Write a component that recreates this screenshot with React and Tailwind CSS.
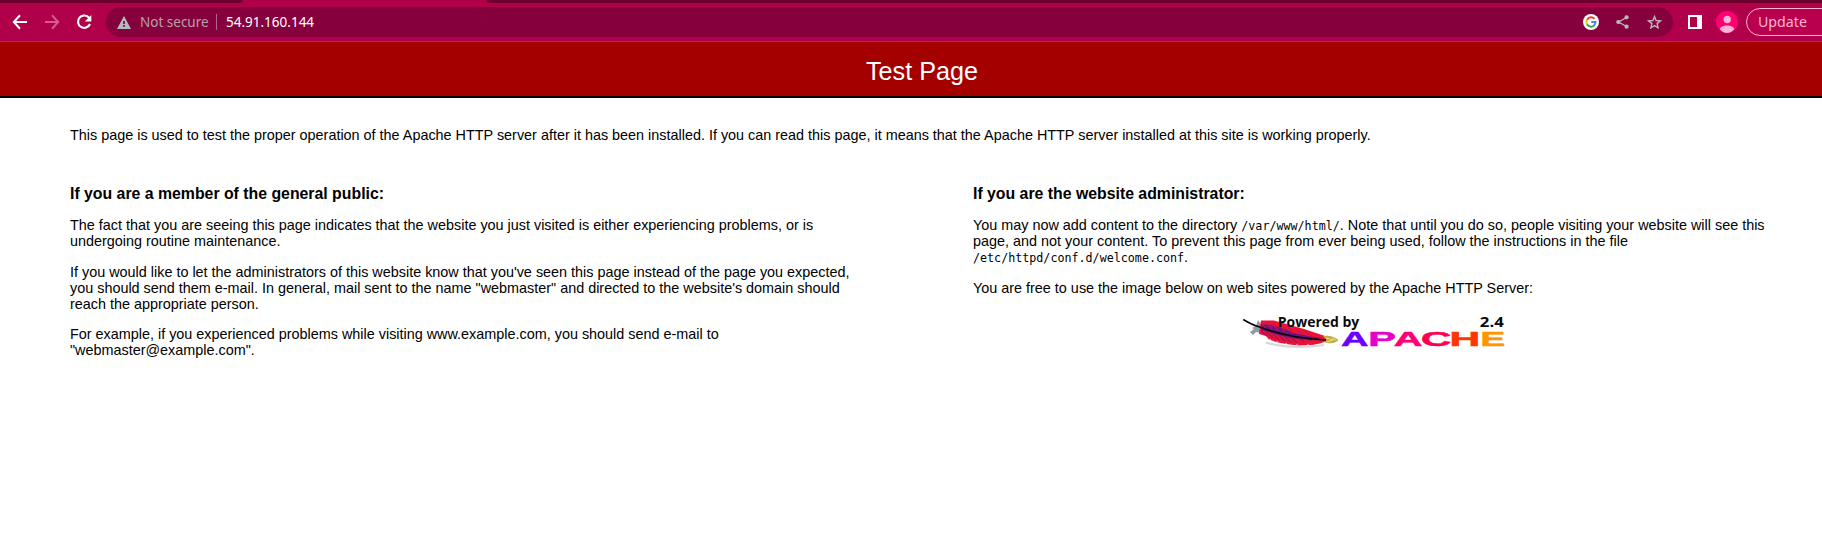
import React from "react";

function Toolbar() {
  return (
    <header className="bg-[#b00049] h-[42px] border-b border-[#c8186a] font-['Noto_Sans',sans-serif] overflow-hidden">
      <div className="flex h-[3px] justify-between">
        <div className="w-[243px] h-[3px] bg-[#6e002d] rounded-br-[5px]" />
        <div className="w-[1335px] h-[3px] bg-[#6e002d] rounded-bl-[5px]" />
      </div>
      <div className="flex items-center h-[30px] mt-[4px]">
        <svg className="ml-[12px] w-4 h-4 shrink-0" viewBox="0 0 16 16" fill="none" stroke="#fff" strokeWidth="2">
          <path d="M15 8H2.5M8 1.3 1.8 8 8 14.7" />
        </svg>
        <svg className="ml-[16px] w-4 h-4 shrink-0" viewBox="0 0 16 16" fill="none" stroke="#d75a93" strokeWidth="2">
          <path d="M1 8h12.5M8 1.3 14.2 8 8 14.7" />
        </svg>
        <svg className="ml-[16px] w-4 h-4 shrink-0" viewBox="0 0 16 16">
          <path d="M13.2 4A6.2 6.2 0 1 0 14 10" fill="none" stroke="#fff" strokeWidth="2.1" />
          <path d="M15.3 1v6.4H8.8z" fill="#fff" />
        </svg>
        <div className="ml-[14px] w-[1567px] h-[30px] rounded-full bg-[#87003e] flex items-center shrink-0">
          <svg className="ml-[11px] w-[14px] h-[13px] shrink-0" viewBox="0 0 14 13">
            <path d="M7 0 14 13H0z" fill="#b4b9bd" />
            <path d="M6.2 5h1.7v3H6.2zm0 4h1.7v1.7H6.2z" fill="#87003e" />
          </svg>
          <span className="ml-[9px] w-[68px] text-[13.5px] leading-[30px] text-[#b7a0aa] whitespace-nowrap">Not secure</span>
          <div className="ml-[8px] w-px h-4 bg-[#b3668b]" />
          <span className="ml-[9px] text-[13.5px] leading-[30px] text-white whitespace-nowrap">54.91.160.144</span>
          <div className="ml-auto mr-[11px] flex items-center">
            <svg className="w-4 h-4" viewBox="0 0 16 16" fill="none" strokeWidth="2">
              <circle cx="8" cy="8" r="8" fill="#fff" />
              <path d="M4 5.7A4.7 4.7 0 0 1 11.5 4.8" stroke="#ea4335" />
              <path d="M4 10.3a4.7 4.7 0 0 1 0-4.6" stroke="#fbbc05" />
              <path d="M11.1 11.5A4.7 4.7 0 0 1 4 10.3" stroke="#34a853" />
              <path d="M8.2 8h4.3a4.7 4.7 0 0 1-1.6 3.5" stroke="#4285f4" />
            </svg>
            <svg className="ml-[17px] w-[13px] h-[14px]" viewBox="0 0 13 14" fill="#b9b9b9">
              <path d="M10.5 2.5 2.5 7l8 4.5" fill="none" stroke="#b9b9b9" strokeWidth="1.4" />
              <circle cx="10.6" cy="2.3" r="2.1" />
              <circle cx="2.3" cy="7" r="2.1" />
              <circle cx="10.6" cy="11.7" r="2.1" />
            </svg>
            <svg className="ml-[18px] w-[15px] h-[14px]" viewBox="0 0 15 14" fill="none" stroke="#c2b0b9" strokeWidth="1.4">
              <path d="m7.5 1.6 1.6 3.9 4.2.4-3.2 2.7 1 4.2-3.6-2.2-3.6 2.2 1-4.2-3.2-2.7 4.2-.4z" />
            </svg>
          </div>
        </div>
        <div className="ml-[15px] w-[14px] h-[14px] border-2 border-r-[5px] border-white shrink-0" />
        <svg className="ml-[14px] w-[22px] h-[22px] shrink-0" viewBox="0 0 22 22">
          <circle cx="11" cy="11" r="11" fill="#ff0070" />
          <circle cx="11.2" cy="8.5" r="3.7" fill="#ffb3d6" />
          <path d="M4 18.2c0-2.5 4-3.7 7.1-3.7s7.1 1.2 7.1 3.7C16.5 20.5 13.8 22 11 22s-5.4-1.5-7-3.8z" fill="#ffb3d6" />
        </svg>
        <div className="ml-[8px] w-[110px] h-[28px] shrink-0 rounded-full border border-[#ffb5d4] bg-[#b8004f] pl-[11px] text-[14.2px] leading-[26px] text-[#ffb5d4]">Update</div>
      </div>
    </header>
  );
}

function ApacheLogo() {
  return (
    <svg className="ml-[267px] block w-[272px] h-[44px]" viewBox="0 0 272 44">
      <path d="M10 24l4-3-2-1 4-2 2-6 3 5v8l-5-1-3 3z" fill="#8d9ba3" />
      <path d="M26 34.5c14 4.500 38 6 58 2.500" stroke="#d8d8d8" strokeWidth="2" fill="none" />
      <path d="M21 12.500 34 12.500 50 17 64 21 76 25 85 28 87 33 80 35.500 72 37 58 37.500 46 36 36 34 29 31.500 26 28 19 26z" fill="#ea1238" />
      <path d="M21 16 30 17 42 20 54 25 68 28 80 30 78 32 62 31.500 50 30 38 27 28 24 21 22z" fill="#6d1680" />
      <path d="m21 14 4 6m2-6 5 7m1-6 5 8m2-6 5 7m3-5 5 6m3-4 5 5m3-4 4 4" stroke="#d41046" strokeWidth="1.2" fill="none" />
      <path d="m21 23 6 5m-1-5 7 7m-1-5 7 7m0-5 6 6m0-4 6 5m1-4 5 5m2-5 5 4m3-4 4 3" stroke="#a0145c" strokeWidth="1.1" fill="none" />
      <path d="m28 33 3-2m4 4 3-2m6 4 3-2m8 3 3-2m8 2 3-2" stroke="#fff" strokeWidth="0.6" fill="none" />
      <path d="M83 28c7-1 12 1 15.500 4-4 4-9 4-15 2l3-2z" fill="#bfae45" />
      <path d="m86 30 7 2-6 2m5-4 4 2" stroke="#eee18a" strokeWidth="0.9" fill="none" />
      <path d="M3.300 11.500C9 15 13 17 18 18.500S45 30 86 32" fill="none" stroke="#0b0008" strokeWidth="1.6" />
      <g fontFamily="'Open Sans', 'Noto Sans', sans-serif" fontWeight="700" fontSize="14" fill="#0a0a0a">
        <text x="37.8" y="19" textLength="81.5" lengthAdjust="spacingAndGlyphs">Powered by</text>
        <text x="239.8" y="19" textLength="24" lengthAdjust="spacingAndGlyphs">2.4</text>
      </g>
      <g fontFamily="'Liberation Sans', Arial, sans-serif" fontWeight="700" fontSize="19.5" strokeWidth="0.5">
        <text x="101" y="37.7" textLength="27.5" lengthAdjust="spacingAndGlyphs" fill="#6a00ff" stroke="#6a00ff">A</text>
        <text x="128.2" y="37.7" textLength="27.7" lengthAdjust="spacingAndGlyphs" fill="#e600cc" stroke="#e600cc">P</text>
        <text x="153.8" y="37.7" textLength="28.7" lengthAdjust="spacingAndGlyphs" fill="#ff0074" stroke="#ff0074">A</text>
        <text x="181" y="37.7" textLength="30.3" lengthAdjust="spacingAndGlyphs" fill="#ff0050" stroke="#ff0050">C</text>
        <text x="209.6" y="37.7" textLength="30.7" lengthAdjust="spacingAndGlyphs" fill="#ff3600" stroke="#ff3600">H</text>
        <text x="240.5" y="37.7" textLength="24.7" lengthAdjust="spacingAndGlyphs" fill="#ff9600" stroke="#ff9600">E</text>
      </g>
    </svg>
  );
}

export default function App() {
  return (
    <div className="w-[1822px] h-[546px] overflow-hidden bg-white text-black font-['Liberation_Sans',Arial,sans-serif] text-[14.4px] leading-[16px]">
      <Toolbar />
      <h1 className="h-[56px] bg-[#a50000] border-b-2 border-black text-white text-center text-[25.2px] leading-[28px] pt-[15px] pl-[22px]">Test Page</h1>
      <main className="px-[70px] pt-[29px]">
        <p>This page is used to test the proper operation of the Apache HTTP server after it has been installed. If you can read this page, it means that the Apache HTTP server installed at this site is working properly.</p>
        <div className="flex gap-[103px] mt-[42px]">
          <section className="w-[800px] shrink-0 space-y-[14.4px]">
            <h2 className="text-[15.84px] leading-[18px] font-bold">If you are a member of the general public:</h2>
            <p>The fact that you are seeing this page indicates that the website you just visited is either experiencing problems, or is<br />undergoing routine maintenance.</p>
            <p>If you would like to let the administrators of this website know that you've seen this page instead of the page you expected,<br />you should send them e-mail. In general, mail sent to the name "webmaster" and directed to the website's domain should<br />reach the appropriate person.</p>
            <p>For example, if you experienced problems while visiting www.example.com, you should send e-mail to<br />"webmaster@example.com".</p>
          </section>
          <section className="w-[806px] shrink-0">
            <div className="space-y-[14.4px]">
              <h2 className="text-[15.84px] leading-[18px] font-bold">If you are the website administrator:</h2>
              <p>You may now add content to the directory <code className="font-['DejaVu_Sans_Mono',monospace] text-[11.7px] leading-[14px]">/var/www/html/</code>. Note that until you do so, people visiting your website will see this<br />page, and not your content. To prevent this page from ever being used, follow the instructions in the file<br /><code className="font-['DejaVu_Sans_Mono',monospace] text-[11.7px] leading-[14px]">/etc/httpd/conf.d/welcome.conf</code>.</p>
              <p>You are free to use the image below on web sites powered by the Apache HTTP Server:</p>
            </div>
            <div className="pt-[12px]">
              <ApacheLogo />
            </div>
          </section>
        </div>
      </main>
    </div>
  );
}
